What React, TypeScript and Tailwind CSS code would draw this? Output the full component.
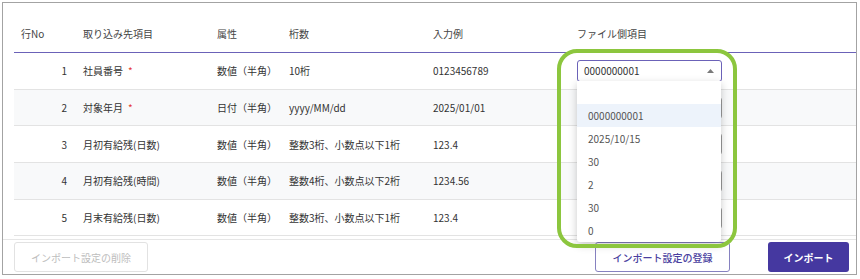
import React from 'react'

const font = { fontFamily: '"Noto Sans CJK JP", "Noto Sans", sans-serif' }

type Row = { no: number; name: string; required?: boolean; attr: string; digits: string; sample: string }

const rows: Row[] = [
  { no: 1, name: '社員番号', required: true, attr: '数値（半角）', digits: '10桁', sample: '0123456789' },
  { no: 2, name: '対象年月', required: true, attr: '日付（半角）', digits: 'yyyy/MM/dd', sample: '2025/01/01' },
  { no: 3, name: '月初有給残(日数)', attr: '数値（半角）', digits: '整数3桁、小数点以下1桁', sample: '123.4' },
  { no: 4, name: '月初有給残(時間)', attr: '数値（半角）', digits: '整数4桁、小数点以下2桁', sample: '1234.56' },
  { no: 5, name: '月末有給残(日数)', attr: '数値（半角）', digits: '整数3桁、小数点以下1桁', sample: '123.4' },
]

const options = ['', '0000000001', '2025/10/15', '30', '2', '30', '0']

const cols = 'grid grid-cols-[62px_134px_72px_144px_144px_264px] items-center'

export default function App() {
  return (
    <div className="w-[860px] h-[279px] bg-white pt-[2px] pl-[2px]" style={font}>
      <div className="relative w-[855px] h-[273px] border border-[#a3a3a3] overflow-hidden flex flex-col">
        <div className="h-[236px] overflow-hidden pl-[11px] pt-[11px]">
          <div className={`${cols} h-[39px] border-b border-[#6b62b8] text-[10px] text-[#444]`}>
            <div className="pl-[7px]">行No</div>
            <div className="pl-[7px]">取り込み先項目</div>
            <div className="pl-[7px]">属性</div>
            <div className="pl-[7px]">桁数</div>
            <div className="pl-[7px]">入力例</div>
            <div className="pl-[7px]">ファイル側項目</div>
          </div>
          {rows.map((r, i) => (
            <div
              key={r.no}
              className={`${cols} h-[36.7px] border-b border-[#e3e3e3] text-[10px] text-[#333] ${i % 2 === 1 ? 'bg-[#f8f9fa]' : 'bg-white'}`}
            >
              <div className="text-right pr-[9px]">{r.no}</div>
              <div className="pl-[7px]">
                {r.name}
                {r.required && <span className="ml-[5px] text-[#e53935]">*</span>}
              </div>
              <div className="pl-[7px]">{r.attr}</div>
              <div className="pl-[7px]">{r.digits}</div>
              <div className="pl-[7px]">{r.sample}</div>
              <div className="pl-[7px]">
                {/* only row 1's select is visible; the rest sit behind the open list */}
                <div
                  className={`w-[145px] h-[22px] rounded-[3px] bg-white flex items-center justify-between pl-[6px] pr-[7px] border ${
                    i === 0 ? 'border-[#6b62b8]' : 'border-[#9a9a9a]'
                  }`}
                >
                  {i === 0 && (
                    <>
                      <span>0000000001</span>
                      <svg width="7" height="4" viewBox="0 0 7 4">
                        <path d="M0 4 L3.5 0 L7 4 Z" fill="#7a7a7a" />
                      </svg>
                    </>
                  )}
                </div>
              </div>
            </div>
          ))}
        </div>

        <div className="flex-1 border-t border-[#e6e6e6] flex items-start justify-between pl-[11px] pr-[7px] pt-[2px]">
          <button className="w-[134px] h-[30px] rounded-[3px] border border-[#e2e2e2] bg-white text-[10px] text-[#bdbdbd]">
            インポート設定の削除
          </button>
          <div className="flex gap-[38px]">
            <button className="w-[135px] h-[30px] rounded-[3px] border-[1.5px] border-[#8681c0] bg-white text-[10px] font-medium text-[#4a3fa0]">
              インポート設定の登録
            </button>
            <button className="w-[81px] h-[30px] rounded-[3px] bg-[#4538a0] text-[10px] font-bold text-white">
              インポート
            </button>
          </div>
        </div>

        {/* open dropdown of row 1 */}
        <ul className="absolute left-[574px] top-[78px] w-[144px] h-[161px] bg-white shadow-[0_3px_8px_rgba(0,0,0,0.22)] rounded-b-[3px] text-[10px] text-[#555] z-20">
          {options.map((o, i) => (
            <li key={i} className={`h-[23px] flex items-center pl-[11px] ${i === 1 ? 'bg-[#edf3fb]' : ''}`}>
              {o}
            </li>
          ))}
        </ul>

        {/* highlight annotation */}
        <div className="absolute left-[554px] top-[46px] w-[180px] h-[199px] rounded-[20px] border-4 border-[#8cc63e] z-30 pointer-events-none" />
      </div>
    </div>
  )
}
